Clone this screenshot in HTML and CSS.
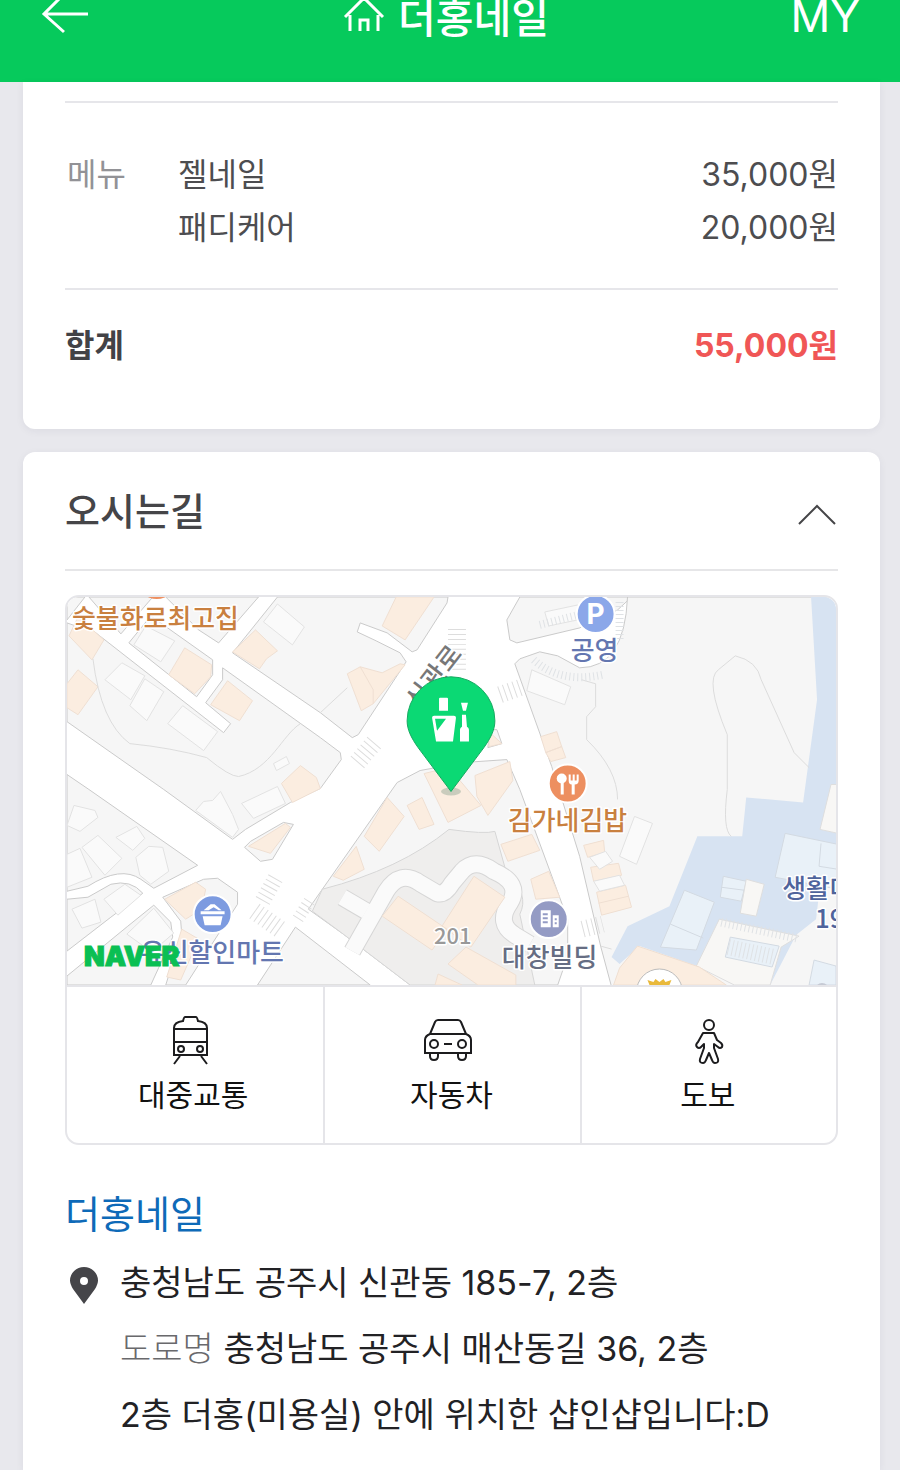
FILE: index.html
```html
<!DOCTYPE html>
<html lang="ko">
<head>
<meta charset="utf-8">
<meta name="viewport" content="width=device-width, initial-scale=1">
<title>더홍네일</title>
<link rel="stylesheet" href="styles.css">
</head>
<body>
<header class="topbar">
  <button class="icon-button" type="button" aria-label="뒤로">
    <svg width="50" height="44" viewBox="0 0 50 44" fill="none" stroke="#fff" stroke-width="3"><path d="M24 2 4 22l20 18M4 22h44"/></svg>
  </button>
  <a class="brand" href="#">
    <svg width="42" height="40" viewBox="0 0 42 40" fill="none" stroke="#fff" stroke-width="3"><path d="M2 23 21 4l19 19M7 21v16M35 21v16M17 37V26h8v11"/></svg>
    <span>더홍네일</span>
  </a>
  <a class="my" href="#">MY</a>
</header>

<main class="page">
  <section class="card receipt">
    <dl class="menu">
      <dt>메뉴</dt>
      <dd>
        <ul class="items">
          <li><span>젤네일</span><span>35,000원</span></li>
          <li><span>패디케어</span><span>20,000원</span></li>
        </ul>
      </dd>
    </dl>
    <p class="total"><span>합계</span><strong>55,000원</strong></p>
  </section>

  <section class="card directions">
    <div class="section-head">
      <h2>오시는길</h2>
      <button class="icon-button" type="button" aria-label="접기">
        <svg width="44" height="30" viewBox="0 0 44 30" fill="none" stroke="#454548" stroke-width="2"><path d="M5 28 23 10l18 18"/></svg>
      </button>
    </div>

    <div class="map-box">
      <svg class="map" viewBox="66 597 771 389" role="img" aria-label="지도">
        <rect x="66" y="597" width="771" height="389" fill="#fff"/>
        <g class="land">
          <path d="M66 623 95 633 223 733 230 724 205 703 222 680V668L320 738 340 753 341 760 320 789 290 803 245 830 232 840 163 790 66 722Z"/>
          <path d="M66 597H84L66 620Z"/>
          <path d="M128 643 196 697 212 675V660L150 616Z"/>
          <path d="M152 597H88L120 634Z"/>
          <path d="M165 597 198 630 218 643 258 597Z"/>
          <path d="M277 597 232 653 320 713 352 738 358 735 406 662 400 653 376 641 357 632 360 623 387 633 412 652 417 650 447 603 448 597Z"/>
          <path d="M66 775 88 790 197 866 153 889 140 880Q120 866 87 887L66 892Z"/>
          <path d="M66 900 87 898 110 885Q130 880 142 894L110 918 66 952Z"/>
          <path d="M153 906 127 927 66 977V986H150L172 938 170 923Z"/>
          <path d="M162 898 203 880 217 879 237 893V905L185 986H165L181 935 180 922Z"/>
          <path d="M244 848 250 842 283 823 293 825 272 860 260 862Z"/>
          <path d="M308 910 397 783 420 771 463 763 507 760 520 790 568 920V957L558 986H410L343 935Z"/>
          <path d="M295 928 257 986H370Z"/>
          <path d="M490 730H497L502 744 488 748Z"/>
          <path d="M520 597 507 620 510 640 517 643 580 628 618 610 632 597Z"/>
          <path d="M515 664 520 659 540 652 558 656 580 668Q625 668 628 597H839V988H612L601 947 580 857 552 767Z"/>
        </g>
        <path class="courtyard" d="M322 890Q400 870 449 830 485 835 495 832L507 875Q530 895 520 915L535 986H410L343 935 312 912Z"/>
        <g class="path-edge"><path d="M352 952 386 892Q400 870 420 884L437 894Q445 896 452 884L462 872Q475 858 494 872 522 884 510 904 496 924 515 936L530 945"/><path d="M342 898 366 912"/></g>
        <g class="path-fill"><path d="M352 952 386 892Q400 870 420 884L437 894Q445 896 452 884L462 872Q475 858 494 872 522 884 510 904 496 924 515 936L530 945"/><path d="M342 898 366 912"/></g>

        <path class="water" d="M812 597 818 700 804 803 747 798 743 837H698L670 907 628 927 612 958 620 965 640 947 700 968 735 986H771L797 936 817 920 820 895 839 880V597Z"/>
        <g class="water-house">
          <path d="M786 834 839 845V890L776 878Z"/><path d="M724 877 747 882 742 902 721 898Z"/><path d="M685 891 715 903 697 951 661 948Z"/><path d="M671 925 704 939M822 844 820 867 839 870M722 888 745 891"/>
        </g>
        <path class="plaza" d="M720 920 800 937 782 948 771 986H735L697 967Z"/>
        <path class="water-house" d="M731 938 780 947 773 968 726 958Z"/>
        <path class="water-house" d="M815 961 837 967V986H810Z"/>
        <path class="hatch" d="M722 923 798 939" stroke-width="9"/>
        <path class="hatch" d="M729 948 775 958" stroke-width="16"/>
        <path class="plaza" d="M747 880 765 885 757 917 741 914ZM839 785 832 785 821 830 839 834Z"/>

        <g class="peach">
          <path d="M68 636 77 617 103 640 91 660ZM77 670 97 687 77 715 66 708V684ZM184 648 211 665 210 677 194 694 168 675ZM227 681 252 701 239 721 210 705Z"/>
          <path d="M255 630 277 651 266 659 259 669 232 652ZM396 597H434L405 640 382 626ZM347 674 360 667 382 673 400 664 405 665 373 704 361 711Z"/>
          <path d="M300 766 316 778 320 789 292 803 281 784ZM248 847 285 824 290 828 270 854ZM164 900 195 883 205 890 201 910 185 920ZM181 930 198 940 180 981 166 978Z"/>
          <path d="M387 798 404 817 379 852 364 837ZM356 847 364 870 343 881 333 877ZM407 806 422 798 434 825 419 830ZM424 774 449 768 481 806 448 823ZM475 776 510 762 513 781 488 816 477 797Z"/>
          <path d="M398 897 447 930 432 951 382 917ZM474 877 505 898 471 948 442 927ZM466 948 516 976V986H478L448 965ZM438 975 462 986H435ZM501 845 532 835 540 851 508 862ZM531 880 549 872 560 898 536 900Z"/>
          <path d="M541 737 557 732 562 747 546 753ZM546 753 562 747 566 758 551 762ZM489 732 502 744 489 747ZM584 846 604 841 605 853 588 858ZM591 868 619 864 622 876 594 882ZM597 893 626 886 632 908 602 916Z"/>
          <path d="M638 947 700 968 727 986H614L620 969Z"/>
          <path d="M360 667 373 690 373 704M599 904 629 897" fill="none"/>
        </g>
        <g class="house">
          <path d="M145 626 174 641 160 662 133 645ZM121 663 144 676 130 700 104 680ZM144 679 163 692 146 721 129 706ZM182 706 217 732 203 751 167 724ZM277 604 304 627 292 645 263 622ZM273 764 286 757 289 764 276 771Z"/>
          <path d="M195 811 203 802 212 801 220 792 232 815 238 830 232 838ZM241 804 277 787 285 804 253 819ZM73 806 94 811 97 818 79 832 66 826ZM81 848 97 836 121 859 104 876ZM115 838 136 827 144 839 132 851ZM135 858 148 847 162 848 168 872 150 885 139 876ZM66 855 79 849 91 878 66 888ZM103 900 124 885 140 896 117 916ZM71 910 94 900 100 923 81 929ZM126 935 153 909 173 934 151 953Z"/>
          <path d="M532 670 571 687 565 705 527 691ZM545 612 578 605V620L549 626ZM635 817 653 824 637 865 620 857ZM590 858 606 852 613 862 600 870ZM594 882 620 876 625 886 600 892Z"/>
        </g>
        <path class="contour" d="M92 659Q100 723 129 744 170 748 206 758 229 777 238 777C270 770 282 735 300 724M320 713 347 688M728 790V735Q705 680 719 670L736 656Q758 661 762 680L795 753 810 768M728 790Q723 830 732 837M582 680 596 684V707L587 717V740Q618 770 618 800M601 947 612 950"/>
        <g class="crossing">
          <path d="M457 629V674" stroke-width="18"/><path d="M520 688 500 695" stroke-width="17"/><path d="M374 743 357 763" stroke-width="18"/><path d="M275 879 262 902" stroke-width="16"/><path d="M254 912 282 932" stroke-width="18"/><path d="M309 902 296 922" stroke-width="12"/><path d="M583 930 603 925" stroke-width="17"/>
        </g>
        <path class="hatch" d="M534 660Q560 684 603 675M620 602V642M540 625 590 612" stroke-width="8"/>

        <text class="label road" transform="translate(419 711) rotate(-52)">신관로</text>
        <g class="label food"><text x="71" y="628">숯불화로최고집</text><text x="508" y="831">김가네김밥</text></g>
        <g class="label blue"><text x="571" y="660">공영</text><text x="140" y="963">유신할인마트</text></g>
        <g class="label slate"><text x="502" y="968">대창빌딩</text></g>
        <g class="label navy"><text x="783" y="899">생활대</text><text x="816" y="929">199</text></g>
        <text class="label number" x="434" y="945">201</text>
        <text class="naver" x="83" y="967">NAVER</text>

        <g stroke="#fff" stroke-width="2">
          <circle cx="596" cy="614" r="19" fill="#8ba7e9"/><circle cx="568" cy="784" r="19" fill="#ed8f60"/><circle cx="212" cy="915" r="19" fill="#7d9be0"/><circle cx="549" cy="920" r="19" fill="#949bc4"/>
        </g>
        <text class="parking" x="596" y="624">P</text>
        <ellipse cx="156" cy="595" rx="10" ry="4" fill="#ed8f60"/>
        <g fill="#fff">
          <circle cx="562" cy="779" r="5"/><path d="M561 783h3v12h-3zM569 775h2v6h2v-6h2v6h2v-6h2v6q0 4-4 4v10h-3v-10q-3 0-3-4z"/>
          <path d="M200 912h24v3h-24zM202 917h20l-2 9h-16zM203 911l7-6h4l7 6h-3l-5-3-5 3z"/>
          <path fill-rule="evenodd" d="M541 911h10v17h-10zM543 914h5v2h-5zM543 918h5v2h-5zM543 922h5v2h-5zM553 916h6v12h-6zM555 919h2v2h-2zM555 923h2v2h-2z"/>
        </g>
        <circle cx="660" cy="993" r="23" fill="#fff" stroke="#bbb"/>
        <path d="M648 981l6 2 2-3 4 3 4-3 2 3 6-2-2 5h-20z" fill="#e9b93b"/>
        <circle cx="823" cy="991" r="7" fill="#c6cad4"/>

        <ellipse cx="451" cy="792" rx="10" ry="4" fill="#819b89" opacity=".4"/>
        <path d="M451 792 418 748C411 738 407 730 407 721A44 44 0 0 1 495 721C495 730 491 738 484 748Z" fill="#0bd974" stroke="#17aa61"/>
        <path fill="#fff" fill-rule="evenodd" d="M440 698h7q1 0 1 1v12h-9v-12q0-1 1-1ZM434 716h20q2 0 2 2l-3 24h-17l-4-24q0-2 2-2ZM435 719 437 731 446 719ZM461 703h7l-2 8h-3ZM462 715h4l1 12q2 1 2 3v12h-9v-12q0-2 2-3Z"/>
      </svg>

      <div class="modes">
        <button type="button">
          <svg width="48" height="50" viewBox="0 0 48 50" fill="none" stroke="#1c1c1e" stroke-width="2"><path d="M5 40V13q0-6 9-7 1-4 2-4h11q1 0 2 4 9 1 9 7v27ZM5 14h33M5 27h33M11 41 5 49M32 41l6 8"/><circle cx="12" cy="34" r="3"/><circle cx="31" cy="34" r="3"/></svg>
          <span>대중교통</span>
        </button>
        <button type="button">
          <svg width="56" height="50" viewBox="0 0 56 50" fill="none" stroke="#1c1c1e" stroke-width="2"><path d="M7 19 12 7q1-2 3-2h20q2 0 3 2l5 12M7 19q-5 2-5 6v13h46V25q0-4-5-6ZM7 38v3q0 4 4 4t4-4v-3M35 38v3q0 4 4 4t4-4v-3M21 29h8"/><circle cx="11" cy="29" r="4"/><circle cx="39" cy="29" r="4"/></svg>
          <span>자동차</span>
        </button>
        <button type="button">
          <svg width="48" height="50" viewBox="0 0 48 50" fill="none" stroke="#1c1c1e" stroke-width="2" stroke-linejoin="round"><circle cx="25" cy="10" r="5"/><path d="M19 18h11l3 7 4 3q2 2 1 4-2 2-4 0l-4-3v4l4 11q1 4-3 4-2 0-3-3l-3-7-3 7q-1 3-3 3-4 0-3-4l4-11v-4l-3 3q-2 2-4 0-2-2 1-5Z"/></svg>
          <span>도보</span>
        </button>
      </div>
    </div>

    <h3 class="shop"><a href="#">더홍네일</a></h3>
    <div class="address">
      <svg width="30" height="38" viewBox="0 0 30 38" aria-hidden="true"><path fill="#454549" fill-rule="evenodd" d="M15 38 4 23Q1 18 1 14.500a14 13.500 0 0 1 28 0Q29 18 26 23ZM15 11a4 4 0 1 0 0 8 4 4 0 0 0 0-8Z"/></svg>
      <address>
        <p>충청남도 공주시 신관동 185-7, 2층</p>
        <p><span class="muted">도로명</span> 충청남도 공주시 매산동길 36, 2층</p>
        <p>2층 더홍(미용실) 안에 위치한 샵인샵입니다:D</p>
      </address>
    </div>
  </section>
</main>
</body>
</html>
```

FILE: styles.css
```css
* { box-sizing: border-box; }

body {
  display: flex;
  flex-direction: column;
  min-height: 100vh;
  margin: 0;
  background: #e8e8ed;
  color: #222;
  font-family: Inter, "Noto Sans CJK KR", sans-serif;
}

h2, h3, p, ul, dl, dd { margin: 0; padding: 0; }
ul { list-style: none; }
a { color: inherit; text-decoration: none; }
svg { display: block; }
button { padding: 0; border: 0; background: none; color: inherit; font: inherit; }

.topbar {
  display: grid;
  grid-template-columns: 1fr auto 1fr;
  align-items: center;
  padding: 0 40px 46px;
  background: #06ca5c;
  color: #fff;
  height: 82px;
}
.topbar .icon-button { justify-self: start; margin-top: -8px; }
.brand {
  display: flex;
  align-items: center;
  gap: 13px;
  margin-right: 8px;
  font-size: 41px;
  font-weight: 500;
  line-height: 36px;
}
.brand svg { margin-top: -8px; }
.my { justify-self: end; font-size: 44px; line-height: 36px; margin-top: -4px; }

.page {
  display: flex;
  flex: 1;
  flex-direction: column;
  gap: 23px;
  padding: 0 20px 0 23px;
}
.card {
  padding: 0 42px;
  border-radius: 12px;
  background: #fff;
  box-shadow: 0 2px 8px rgba(40, 40, 70, .06);
}
.receipt {
  padding-top: 19px;
  border-radius: 0 0 12px 12px;
  font-size: 32px;
  line-height: 53px;
}
.menu {
  display: flex;
  padding: 45px 0 34px;
  border: solid #e6e6ea;
  border-width: 2px 0;
}
.menu dt { flex: 0 0 113px; padding-left: 2px; color: #929296; }
.menu dd { flex: 1; color: #4d4d50; }
.items li, .total { display: flex; justify-content: space-between; }
.total { padding: 29px 0 57px; color: #424246; font-weight: 600; }
.total strong { color: #f05656; font-weight: 700; }

.directions { flex: 1; border-radius: 12px 12px 0 0; }
.section-head {
  display: flex;
  align-items: center;
  justify-content: space-between;
  padding: 31px 0 30px;
  border-bottom: 2px solid #e6e6e8;
}
.section-head h2 { color: #454548; font-size: 38px; font-weight: 500; line-height: 56px; }

.map-box {
  margin-top: 24px;
  overflow: hidden;
  border: 2px solid #e5e5e9;
  border-radius: 14px;
}
.map { width: 100%; height: auto; }
.modes {
  display: grid;
  grid-template-columns: repeat(3, 1fr);
  border-top: 2px solid #e5e5e9;
}
.modes button {
  display: flex;
  flex-direction: column;
  align-items: center;
  gap: 8px;
  padding: 28px 4px 26px 0;
  color: #111;
  font-size: 30px;
  line-height: 44px;
}
.modes button + button { padding-right: 2px; border-left: 2px solid #e5e5e9; }

.land { fill: #f6f6f6; stroke: #cacaca; stroke-width: 1; }
.courtyard { fill: #efeeed; stroke: #d6d6d6; }
.path-edge { fill: none; stroke: #d6d6d6; stroke-width: 18; stroke-linejoin: round; }
.path-fill { fill: none; stroke: #fafafa; stroke-width: 16; stroke-linejoin: round; }
.water { fill: #d7e3f2; }
.water-house { fill: #e9f1f8; stroke: #d3dae2; }
.plaza { fill: #f8f7f5; stroke: #dedede; }
.peach { fill: #fbede0; stroke: #efdfd2; }
.house { fill: #fafafa; stroke: #e2e2e2; }
.contour { fill: none; stroke: #dcdcdc; }
.crossing { fill: none; stroke: #ddd; stroke-dasharray: 1 4; }
.hatch { fill: none; stroke: #dfe2e5; stroke-dasharray: 1 3; }
.label {
  font-family: "Noto Sans CJK KR", sans-serif;
  font-size: 26px;
  font-weight: 500;
  paint-order: stroke;
  stroke: #fff;
  stroke-width: 3px;
  stroke-linejoin: round;
}
.road { fill: #777; }
.food { fill: #c9803f; }
.blue { fill: #6376b0; }
.slate { fill: #666d83; }
.navy { fill: #4f649c; }
.number { fill: #999; font-size: 22px; }
.naver { fill: #0abf53; font-size: 27px; font-weight: 900; stroke: #0abf53; stroke-width: 1px; }
.parking { fill: #fff; font-size: 28px; font-weight: 700; text-anchor: middle; }

.shop { margin-top: 41px; color: #0e6ab8; font-size: 38px; font-weight: 400; line-height: 56px; }
.address { display: flex; gap: 21px; padding: 8px 0 21px 4px; }
.address svg { flex: none; margin-top: 16px; }
address { color: #222225; font-size: 34px; font-style: normal; line-height: 66px; }
.muted { color: #69696c; font-weight: 300; }
```
